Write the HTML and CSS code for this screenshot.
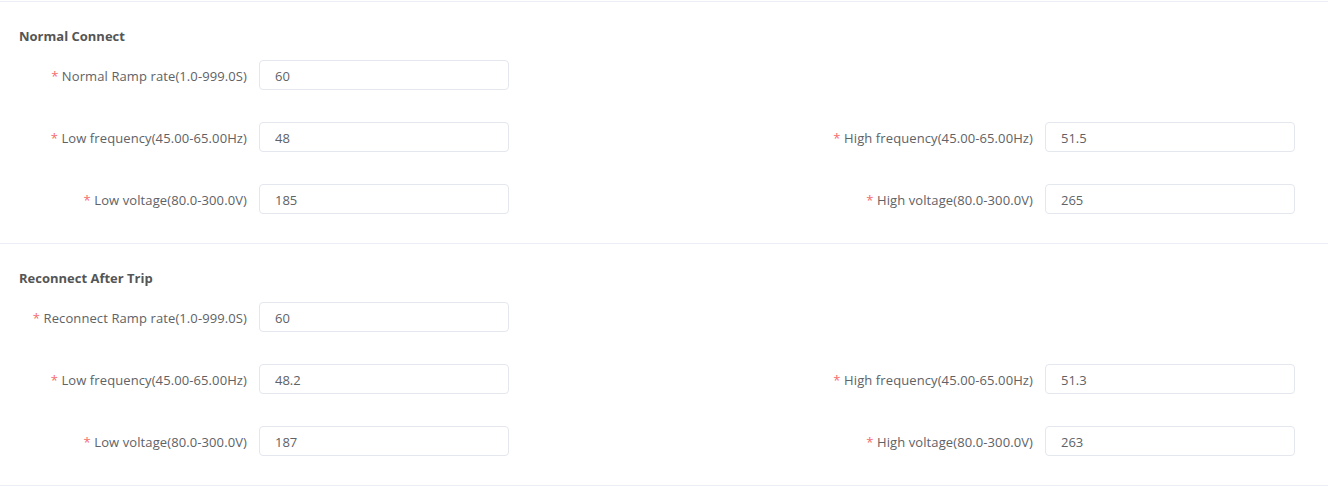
FILE: index.html
```html
<!DOCTYPE html>
<html lang="en">
<head>
    <meta charset="UTF-8">
    <meta name="viewport" content="width=device-width, initial-scale=1.0">
    <link rel="stylesheet" href="styles.css">
    <title>Connect Settings</title>
</head>
<body>
    <div class="panel">
        <div class="section">
            <div class="section-title">Normal Connect</div>
            <div class="row">
                <div class="item">
                    <label class="label"><span class="req">*</span> Normal Ramp rate(1.0-999.0S)</label>
                    <input class="field" type="text" value="60">
                </div>
            </div>
            <div class="row">
                <div class="item">
                    <label class="label"><span class="req">*</span> Low frequency(45.00-65.00Hz)</label>
                    <input class="field" type="text" value="48">
                </div>
                <div class="item">
                    <label class="label"><span class="req">*</span> High frequency(45.00-65.00Hz)</label>
                    <input class="field" type="text" value="51.5">
                </div>
            </div>
            <div class="row">
                <div class="item">
                    <label class="label"><span class="req">*</span> Low voltage(80.0-300.0V)</label>
                    <input class="field" type="text" value="185">
                </div>
                <div class="item">
                    <label class="label"><span class="req">*</span> High voltage(80.0-300.0V)</label>
                    <input class="field" type="text" value="265">
                </div>
            </div>
        </div>

        <div class="section">
            <div class="section-title">Reconnect After Trip</div>
            <div class="row">
                <div class="item">
                    <label class="label"><span class="req">*</span> Reconnect Ramp rate(1.0-999.0S)</label>
                    <input class="field" type="text" value="60">
                </div>
            </div>
            <div class="row">
                <div class="item">
                    <label class="label"><span class="req">*</span> Low frequency(45.00-65.00Hz)</label>
                    <input class="field" type="text" value="48.2">
                </div>
                <div class="item">
                    <label class="label"><span class="req">*</span> High frequency(45.00-65.00Hz)</label>
                    <input class="field" type="text" value="51.3">
                </div>
            </div>
            <div class="row">
                <div class="item">
                    <label class="label"><span class="req">*</span> Low voltage(80.0-300.0V)</label>
                    <input class="field" type="text" value="187">
                </div>
                <div class="item">
                    <label class="label"><span class="req">*</span> High voltage(80.0-300.0V)</label>
                    <input class="field" type="text" value="263">
                </div>
            </div>
        </div>
    </div>
</body>
</html>
```

FILE: styles.css
```css
body {
    font-family: "Open Sans", "Noto Sans", Arial, sans-serif;
    margin: 0;
    padding: 0;
    background-color: #ffffff;
    color: #606266;
}

.panel {
    margin-top: 1px;
    border-top: 1px solid #ebeef5;
}

.section {
    padding: 24px 33px 29px 0;
    border-bottom: 1px solid #ebeef5;
}

.section-title {
    padding-left: 19px;
    font-size: 13px;
    font-weight: bold;
    color: #555555;
    line-height: 20px;
    margin-bottom: 14px;
}

.row {
    display: flex;
    justify-content: space-between;
    margin-bottom: 32px;
}

.row:last-child {
    margin-bottom: 0;
}

.item {
    display: flex;
    align-items: center;
}

.label {
    width: 259px;
    padding: 2px 12px 0 0;
    box-sizing: border-box;
    text-align: right;
    font-size: 13px;
    letter-spacing: 0.1px;
    color: #606266;
    white-space: nowrap;
}

.req {
    color: #f56c6c;
}

.field {
    width: 250px;
    height: 30px;
    box-sizing: border-box;
    border: 1px solid #e4e7ed;
    border-radius: 4px;
    padding: 2px 15px 0;
    font-family: inherit;
    font-size: 13px;
    color: #606266;
    outline: none;
}
```
